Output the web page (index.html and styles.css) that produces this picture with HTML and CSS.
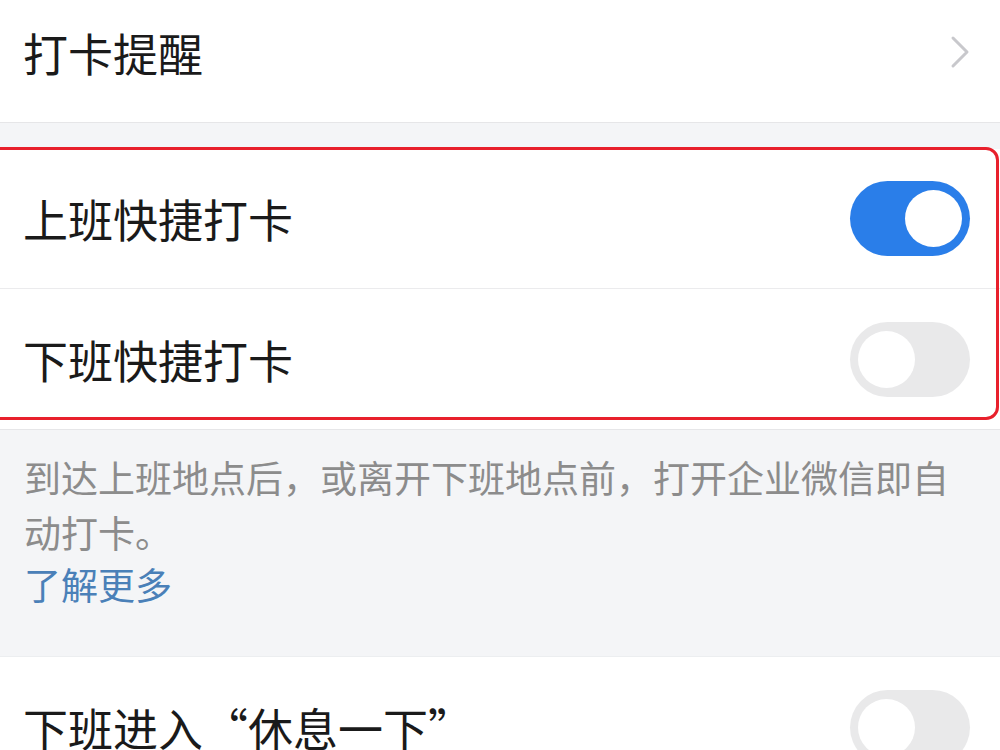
FILE: index.html
```html
<!DOCTYPE html>
<html lang="zh-CN">
<head>
<meta charset="utf-8">
<link rel="stylesheet" href="styles.css">
</head>
<body>
<div class="page">
  <div class="group group-first">
    <div class="row">
      <span class="label">打卡提醒</span>
      <svg class="chevron" width="20" height="34" viewBox="0 0 20 34"><path d="M3 3 L17 17 L3 31" fill="none" stroke="#c8c8cc" stroke-width="3" stroke-linecap="round" stroke-linejoin="round"/></svg>
    </div>
  </div>
  <div class="group group-mid">
    <div class="row row-divided">
      <span class="label">上班快捷打卡</span>
      <span class="toggle on"><span class="knob"></span></span>
    </div>
    <div class="row">
      <span class="label">下班快捷打卡</span>
      <span class="toggle"><span class="knob"></span></span>
    </div>
    <div class="highlight"></div>
  </div>
  <div class="note">
    <p class="note-text">到达上班地点后，或离开下班地点前，打开企业微信即自动打卡。</p>
    <a class="note-link">了解更多</a>
  </div>
  <div class="group">
    <div class="row">
      <span class="label">下班进入“休息一下”</span>
      <span class="toggle"><span class="knob"></span></span>
    </div>
  </div>
</div>
</body>
</html>
```
FILE: styles.css
```css
html, body {
  margin: 0;
  padding: 0;
  background: #f4f5f7;
  overflow: hidden;
}
.page {
  width: 1000px;
  height: 768px;
  margin-top: -18px;
  overflow: hidden;
  font-family: "Noto Sans CJK SC", "Noto Sans", sans-serif;
  color: #1a1a1a;
}
.group {
  background: #ffffff;
  position: relative;
  border-bottom: 1px solid #e6e6e8;
}
.group-first {
  margin-bottom: 26px;
}
.row {
  height: 140px;
  display: flex;
  align-items: center;
  justify-content: space-between;
  padding: 0 30px 0 23px;
  box-sizing: border-box;
}
.row-divided {
  border-bottom: 1px solid #ebebed;
}
.label {
  font-size: 45px;
  line-height: 1;
}
.toggle {
  width: 120px;
  height: 75px;
  border-radius: 38px;
  background: #e9e9ea;
  display: flex;
  align-items: center;
  padding: 0 8px;
  box-sizing: border-box;
  flex-shrink: 0;
}
.toggle.on {
  background: #2a7ee9;
  justify-content: flex-end;
}
.knob {
  width: 57px;
  height: 57px;
  border-radius: 50%;
  background: #ffffff;
}
.highlight {
  position: absolute;
  left: -12px;
  right: 1px;
  top: -2px;
  bottom: 9px;
  border: 3px solid #e8202c;
  border-radius: 13px;
  pointer-events: none;
}
.note {
  padding: 20px 25px 0 24px;
  height: 227px;
  box-sizing: border-box;
  border-bottom: 1px solid #eceef0;
}
.note-text {
  margin: 0;
  font-size: 37px;
  line-height: 55px;
  color: #8c8c8c;
}
.note-link {
  display: block;
  font-size: 37px;
  line-height: 48px;
  color: #4a80b8;
}
```
